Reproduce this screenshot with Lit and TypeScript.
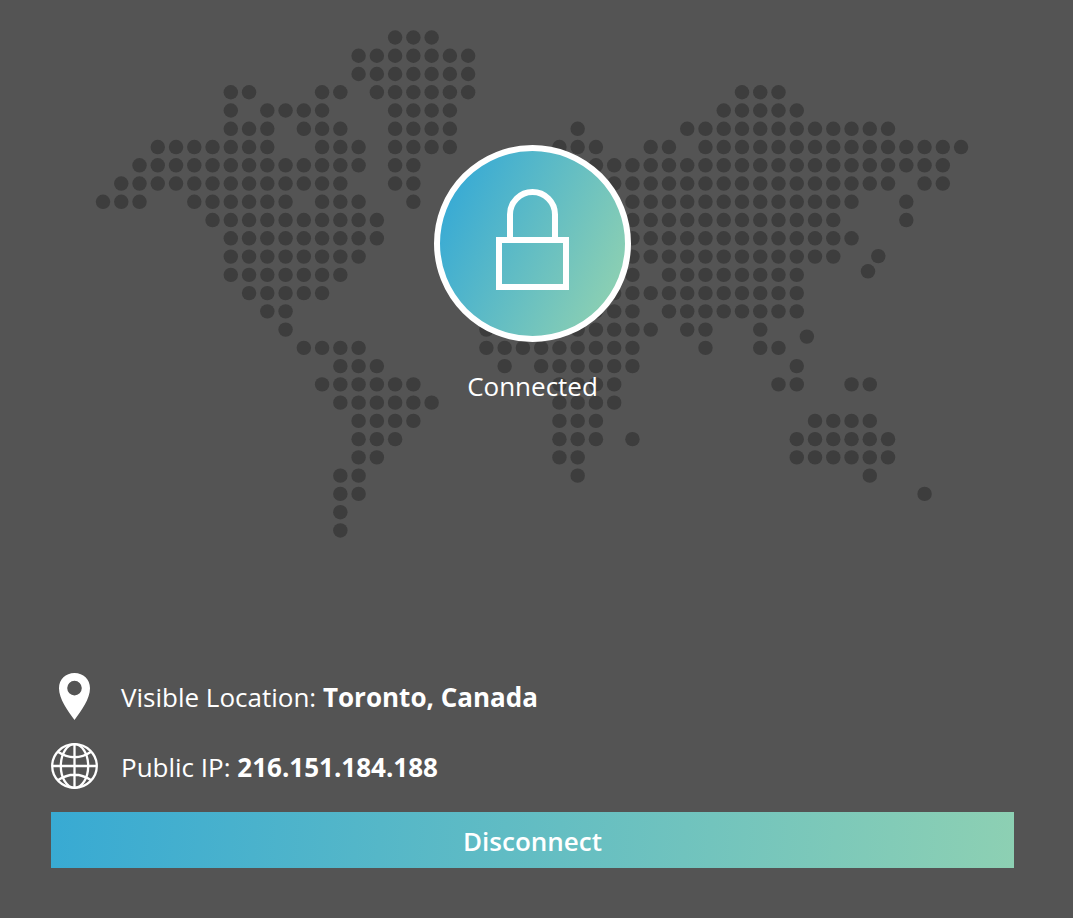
import { LitElement, html, css, svg } from "lit";
import { customElement, property, state } from "lit/decorators.js";

type Run = [from: number, to: number];

const PITCH = 18.25;
const RADIUS = 7.2;
const ORIGIN_X = 9;
const ORIGIN_Y = 7.5;

/** Filled column ranges of the dotted world map, one entry per row from north to south. */
const MAP_ROWS: Run[][] = [
  [[16, 18]],
  [[14, 20]],
  [[14, 20]],
  [[7, 8], [12, 13], [15, 20], [35, 37]],
  [[7, 7], [9, 12], [16, 19], [34, 38]],
  [[7, 9], [11, 13], [16, 19], [26, 26], [32, 43]],
  [[3, 9], [12, 14], [16, 19], [25, 27], [30, 31], [33, 47]],
  [[2, 14], [16, 17], [27, 46]],
  [[1, 13], [16, 17], [28, 43], [45, 46]],
  [[0, 2], [5, 10], [12, 14], [17, 17], [29, 41], [44, 44]],
  [[6, 15], [29, 40], [44, 44]],
  [[7, 15], [29, 41]],
  [[7, 14], [29, 40]],
  [[7, 13], [28, 29], [31, 38]],
  [[8, 12], [28, 38]],
  [[9, 10], [27, 29], [31, 38]],
  [[10, 10], [21, 21], [26, 30], [32, 33], [36, 36]],
  [[11, 14], [21, 29], [33, 33], [36, 37]],
  [[13, 15], [22, 22], [24, 29], [38, 38]],
  [[12, 17], [25, 28], [37, 38], [41, 42]],
  [[13, 18], [25, 28]],
  [[14, 17], [25, 27], [39, 42]],
  [[14, 16], [25, 27], [29, 29], [38, 43]],
  [[14, 15], [25, 26], [38, 43]],
  [[13, 14], [26, 26], [42, 42]],
  [[13, 14], [45, 45]],
  [[13, 13]],
  [[13, 13]],
];

/** Islands that sit between the columns and rows of the grid. */
const ISLANDS: [x: number, y: number][] = [
  [784, 226],
  [773.7, 241.2],
  [712.6, 306.5],
];

@customElement("world-map")
export class WorldMap extends LitElement {
  static styles = css`
    :host {
      display: block;
    }
    .map {
      display: block;
      width: 100%;
      fill: #3d3d3d;
    }
  `;

  render() {
    const points = MAP_ROWS.flatMap((runs, row) =>
      runs.flatMap(([from, to]) =>
        Array.from({ length: to - from + 1 }, (_, i) => [
          ORIGIN_X + (from + i) * PITCH,
          ORIGIN_Y + row * PITCH,
        ]),
      ),
    );
    return html`
      <svg class="map" viewBox="0 0 876 508" aria-hidden="true">
        ${[...points, ...ISLANDS].map(
          ([x, y]) => svg`<circle cx=${x} cy=${y} r=${RADIUS}></circle>`,
        )}
      </svg>
    `;
  }
}

@customElement("status-badge")
export class StatusBadge extends LitElement {
  @property({ type: Boolean }) connected = false;

  static styles = css`
    :host {
      display: flex;
      flex-direction: column;
      align-items: center;
      gap: 26px;
    }
    .disc {
      display: grid;
      place-items: center;
      box-sizing: border-box;
      width: 197px;
      height: 197px;
      padding-bottom: 8px;
      border: 6px solid #fff;
      border-radius: 50%;
      background: linear-gradient(115deg, #35a9d6 10%, #8dd0b2 88%) border-box;
    }
    .lock {
      width: 73px;
      height: 101px;
      fill: none;
      stroke: #fff;
      stroke-width: 6;
    }
    .label {
      margin: 0;
      line-height: 36px;
    }
  `;

  render() {
    return html`
      <div class="disc">
        <svg class="lock" viewBox="0 0 73 101" aria-hidden="true">
          <path d="M14 49V25.5a22.5 22.5 0 0 1 45 0V49"></path>
          <rect x="3" y="51" width="67" height="47"></rect>
        </svg>
      </div>
      <p class="label" role="status">${this.connected ? "Connected" : "Disconnected"}</p>
    `;
  }
}

@customElement("app-root")
export class AppRoot extends LitElement {
  @state() private connected = true;

  static styles = css`
    :host {
      display: flex;
      flex-direction: column;
      box-sizing: border-box;
      min-height: 100vh;
      padding: 30px 59px 50px 51px;
      background: #545454;
      color: #fff;
      font: 400 26px "Open Sans", "Noto Sans", sans-serif;
    }
    .hero {
      flex: 1;
      display: grid;
      justify-items: center;
      align-items: start;
    }
    .hero > * {
      grid-area: 1 / 1;
    }
    .world {
      width: 91%;
    }
    .status {
      padding-top: 115px;
    }
    .details {
      display: flex;
      flex-direction: column;
      gap: 23px;
      margin: 0 0 22px;
      padding: 0;
      list-style: none;
    }
    .detail {
      display: flex;
      align-items: center;
      gap: 23px;
    }
    .icon {
      flex: none;
      width: 47px;
      height: 47px;
    }
    .pin {
      fill: #fff;
    }
    .globe {
      fill: none;
      stroke: #fff;
      stroke-width: 2.3;
    }
    .value {
      font-weight: 700;
    }
    .action {
      height: 56px;
      border: 0;
      padding: 2px 16px 0;
      background: linear-gradient(94deg, #38aad3, #8dd0b3);
      color: inherit;
      font: inherit;
      font-weight: 600;
      cursor: pointer;
    }
  `;

  private toggle() {
    this.connected = !this.connected;
  }

  render() {
    return html`
      <main class="hero">
        <world-map class="world"></world-map>
        <status-badge class="status" ?connected=${this.connected}></status-badge>
      </main>
      <ul class="details">
        <li class="detail">
          <svg class="icon pin" viewBox="0 0 47 47" aria-hidden="true">
            <path
              fill-rule="evenodd"
              d="M23.5 0C14.6 0 8 6.4 8 15.200C8 26 16.500 37 23.500 47C30.500 37 39 26 39 15.200C39 6.400 32.400 0 23.500 0ZM23.500 7.800a7.300 7.300 0 1 1 0 14.600a7.300 7.300 0 0 1 0-14.600Z"
            ></path>
          </svg>
          <span>Visible Location: <span class="value">Toronto, Canada</span></span>
        </li>
        <li class="detail">
          <svg class="icon globe" viewBox="0 0 47 47" aria-hidden="true">
            <ellipse cx="23.5" cy="23" rx="22.3" ry="21.8"></ellipse>
            <ellipse cx="23.5" cy="23" rx="13.7" ry="21.8"></ellipse>
            <path d="M23.5 1V45M1 23H46M6.500 8.500Q23.500 20 40.500 8.500M6.500 37.500Q23.500 26 40.500 37.500"></path>
          </svg>
          <span>Public IP: <span class="value">216.151.184.188</span></span>
        </li>
      </ul>
      <button class="action" type="button" @click=${this.toggle}>
        ${this.connected ? "Disconnect" : "Connect"}
      </button>
    `;
  }
}
